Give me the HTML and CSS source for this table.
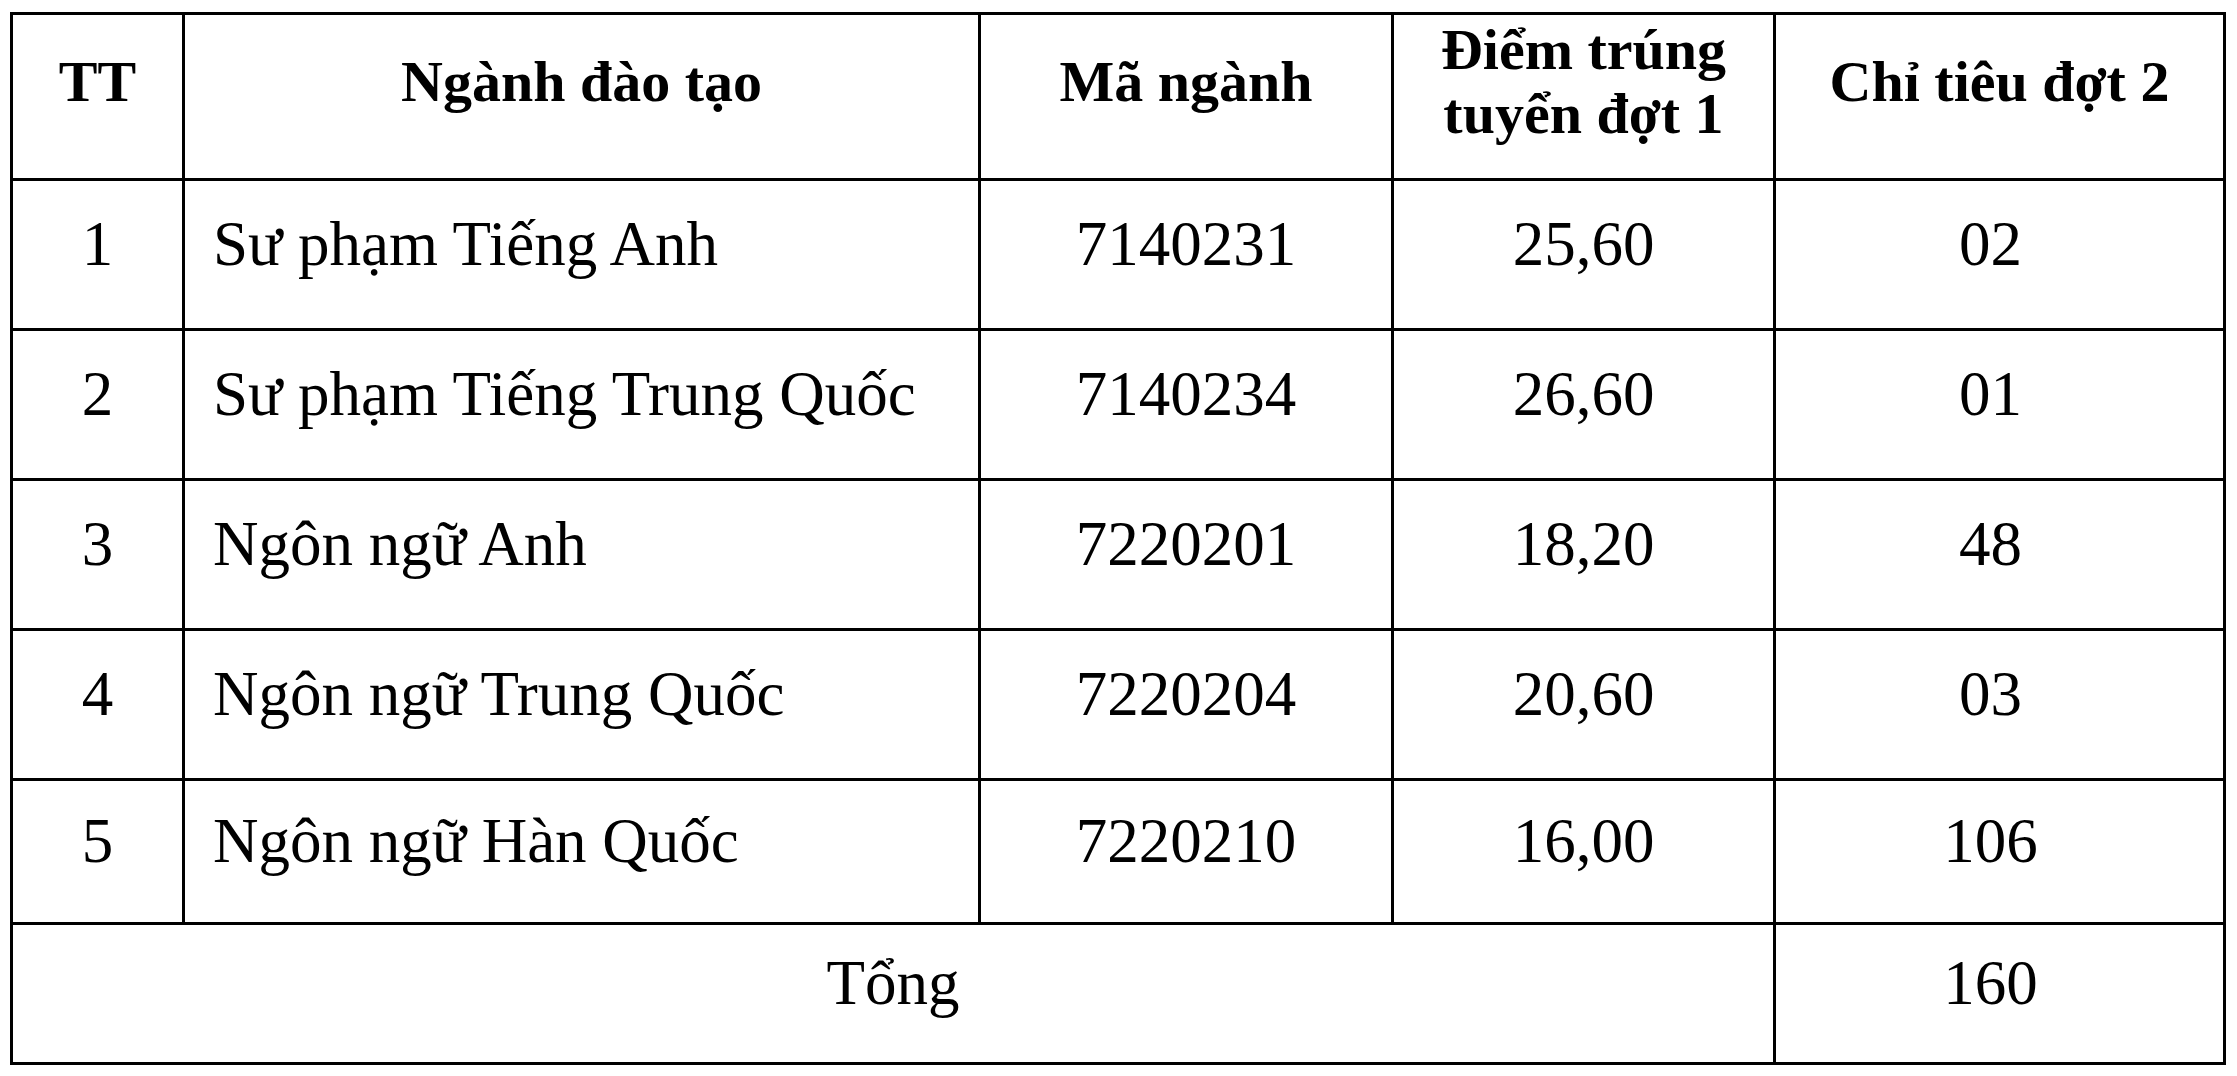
FILE: index.html
```html
<!DOCTYPE html>
<html lang="vi">
<head>
<meta charset="utf-8">
<title>Chỉ tiêu đợt 2</title>
<link rel="stylesheet" href="styles.css">
</head>
<body>
<div class="page">
  <table class="admit">
    <colgroup>
      <col class="c-tt">
      <col class="c-name">
      <col class="c-code">
      <col class="c-score">
      <col class="c-quota">
    </colgroup>
    <thead>
      <tr class="head">
        <th>TT</th>
        <th>Ngành đào tạo</th>
        <th>Mã ngành</th>
        <th class="two">Điểm trúng<br>tuyển đợt 1</th>
        <th>Chỉ tiêu đợt 2</th>
      </tr>
    </thead>
    <tbody>
      <tr class="row">
        <td class="num">1</td>
        <td class="name">Sư phạm Tiếng Anh</td>
        <td class="mid">7140231</td>
        <td class="mid">25,60</td>
        <td class="quota">02</td>
      </tr>
      <tr class="row">
        <td class="num">2</td>
        <td class="name">Sư phạm Tiếng Trung Quốc</td>
        <td class="mid">7140234</td>
        <td class="mid">26,60</td>
        <td class="quota">01</td>
      </tr>
      <tr class="row">
        <td class="num">3</td>
        <td class="name">Ngôn ngữ Anh</td>
        <td class="mid">7220201</td>
        <td class="mid">18,20</td>
        <td class="quota">48</td>
      </tr>
      <tr class="row">
        <td class="num">4</td>
        <td class="name">Ngôn ngữ Trung Quốc</td>
        <td class="mid">7220204</td>
        <td class="mid">20,60</td>
        <td class="quota">03</td>
      </tr>
      <tr class="row row5">
        <td class="num">5</td>
        <td class="name">Ngôn ngữ Hàn Quốc</td>
        <td class="mid">7220210</td>
        <td class="mid">16,00</td>
        <td class="quota">106</td>
      </tr>
      <tr class="row total">
        <td class="mid" colspan="4">Tổng</td>
        <td class="quota">160</td>
      </tr>
    </tbody>
  </table>
</div>
</body>
</html>
```

FILE: styles.css
```css
html, body {
  margin: 0;
  padding: 0;
  background: #ffffff;
}

.page {
  padding: 12px 0 0 10px;
}

.admit {
  border-collapse: collapse;
  table-layout: fixed;
  width: 2216px;
  font-family: "Liberation Serif", "Times New Roman", serif;
  color: #000;
  background: #fff;
}

.c-tt { width: 172px; }
.c-name { width: 796px; }
.c-code { width: 413px; }
.c-score { width: 382px; }
.c-quota { width: 450px; }

.admit th,
.admit td {
  border: 3px solid #000;
  padding: 0;
  vertical-align: middle;
  text-align: center;
  white-space: nowrap;
}

.admit th {
  font-weight: bold;
  font-size: 58px;
  line-height: 64px;
  height: 133px;
  padding-bottom: 30px;
}

.admit td {
  font-size: 63px;
  line-height: 70px;
  height: 125px;
  padding-bottom: 22px;
}

.row5 td {
  height: 119px;
}

.total td {
  height: 115px;
}

.admit td.name {
  text-align: left;
  padding-left: 28px;
}

.admit td.quota {
  padding-right: 18px;
}
```
